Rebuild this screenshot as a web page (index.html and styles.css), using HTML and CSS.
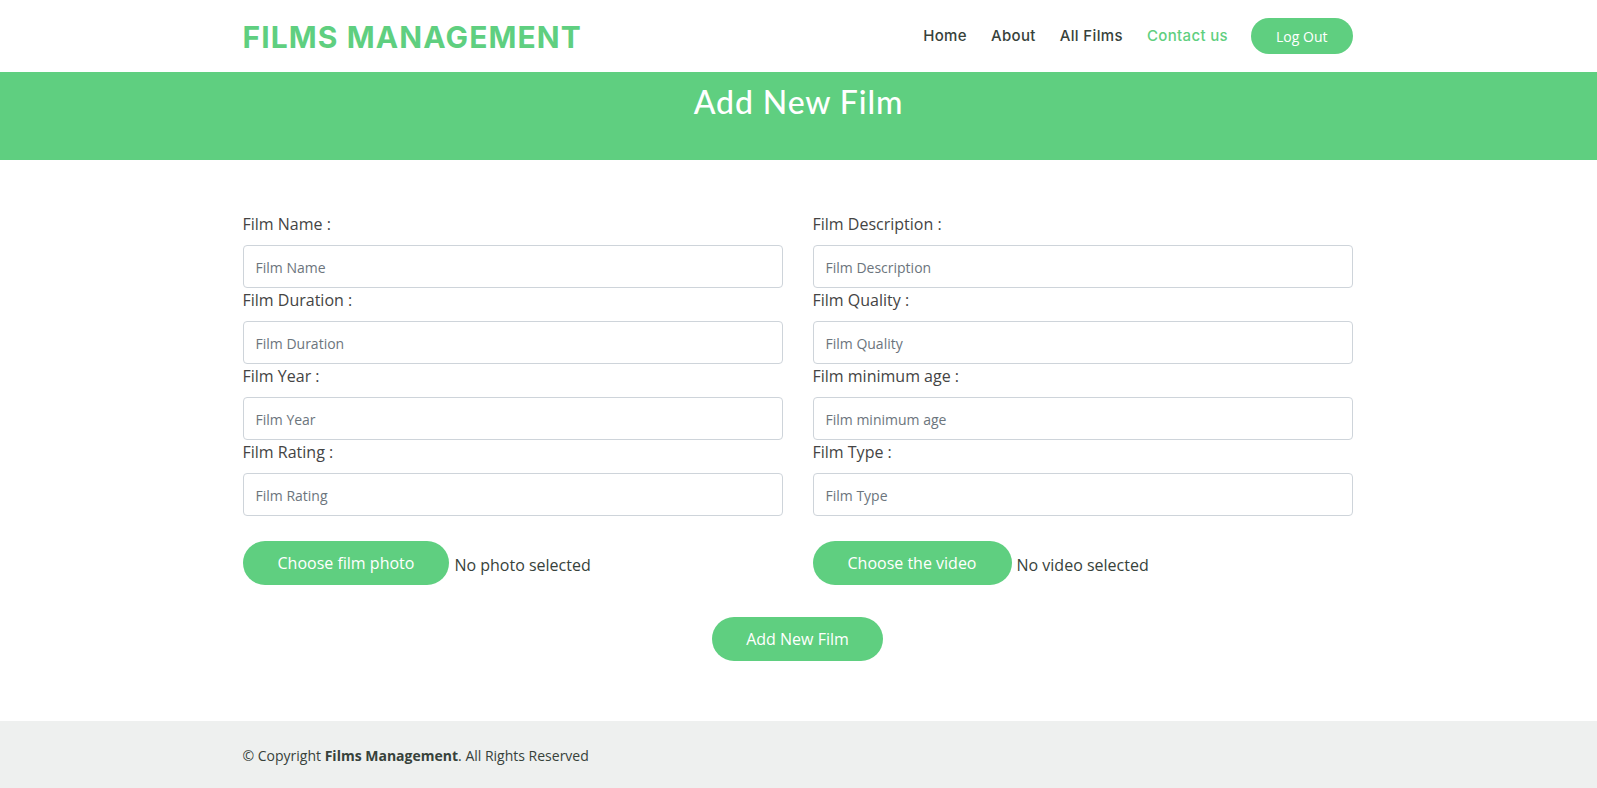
FILE: index.html
```html
<!DOCTYPE html>
<html lang="en">
<head>
<meta charset="utf-8">
<title>Add New Film - Films Management</title>
<link rel="stylesheet" href="styles.css">
</head>
<body>
<header class="header">
  <div class="container header-inner">
    <a class="logo" href="#">Films Management</a>
    <div class="header-right">
      <nav class="nav">
        <a href="#" class="nav-link">Home</a>
        <a href="#" class="nav-link">About</a>
        <a href="#" class="nav-link">All Films</a>
        <a href="#" class="nav-link active">Contact us</a>
      </nav>
      <a href="#" class="logout-btn">Log Out</a>
    </div>
  </div>
</header>

<section class="breadcrumbs">
  <h2 class="page-title">Add New Film</h2>
</section>

<main class="form-section">
  <form class="container film-form">
    <div class="form-grid">
      <div class="field">
        <label class="field-label">Film Name :</label>
        <input class="field-input" type="text" placeholder="Film Name">
      </div>
      <div class="field">
        <label class="field-label">Film Description :</label>
        <input class="field-input" type="text" placeholder="Film Description">
      </div>
      <div class="field">
        <label class="field-label">Film Duration :</label>
        <input class="field-input" type="text" placeholder="Film Duration">
      </div>
      <div class="field">
        <label class="field-label">Film Quality :</label>
        <input class="field-input" type="text" placeholder="Film Quality">
      </div>
      <div class="field">
        <label class="field-label">Film Year :</label>
        <input class="field-input" type="text" placeholder="Film Year">
      </div>
      <div class="field">
        <label class="field-label">Film minimum age :</label>
        <input class="field-input" type="text" placeholder="Film minimum age">
      </div>
      <div class="field">
        <label class="field-label">Film Rating :</label>
        <input class="field-input" type="text" placeholder="Film Rating">
      </div>
      <div class="field">
        <label class="field-label">Film Type :</label>
        <input class="field-input" type="text" placeholder="Film Type">
      </div>
      <div class="file-row">
        <span class="pill-btn">Choose film photo</span>
        <span class="file-status">No photo selected</span>
      </div>
      <div class="file-row">
        <span class="pill-btn">Choose the video</span>
        <span class="file-status">No video selected</span>
      </div>
    </div>
    <div class="submit-row">
      <button type="button" class="pill-btn submit-btn">Add New Film</button>
    </div>
  </form>
</main>

<footer class="footer">
  <div class="container copyright">
    &copy; Copyright <strong>Films Management</strong>. All Rights Reserved
  </div>
</footer>
</body>
</html>
```

FILE: styles.css
```css
* {
  box-sizing: border-box;
}

html, body {
  margin: 0;
  padding: 0;
}

body {
  font-family: "Open Sans", "Liberation Sans", sans-serif;
  color: #444444;
  background: #ffffff;
}

a {
  text-decoration: none;
}

.container {
  width: 1110px;
  margin-left: calc(50% - 556px);
  margin-right: auto;
}

/* Header */
.header {
  height: 72px;
  background: #ffffff;
}

.header-inner {
  height: 72px;
  display: flex;
  align-items: center;
  justify-content: space-between;
}

.logo {
  font-family: "Inter", "Noto Sans", sans-serif;
  font-weight: 700;
  font-size: 30px;
  letter-spacing: 1.1px;
  text-transform: uppercase;
  color: #5fcf80;
  line-height: 1;
  padding-top: 1px;
}

.header-right {
  display: flex;
  align-items: center;
}

.nav {
  display: flex;
  align-items: center;
  gap: 24px;
}

.nav-link {
  font-family: "Inter", "Noto Sans", sans-serif;
  font-weight: 500;
  font-size: 15px;
  letter-spacing: 0.35px;
  color: #37423b;
  line-height: 20px;
}

.nav-link.active {
  color: #5fcf80;
}

.logout-btn {
  margin-left: 23px;
  background: #5fcf80;
  color: #ffffff;
  border-radius: 50px;
  padding: 7.5px 25px;
  font-family: "Open Sans", sans-serif;
  font-size: 14px;
  line-height: 21px;
  display: inline-block;
}

/* Breadcrumbs */
.breadcrumbs {
  background: #5fcf80;
  height: 88px;
  padding-top: 11px;
  text-align: center;
}

.page-title {
  margin: 0;
  font-family: "Lato", "Open Sans", sans-serif;
  font-weight: 500;
  font-size: 32px;
  line-height: 38px;
  color: #ffffff;
  letter-spacing: 0.9px;
}

/* Form */
.form-section {
  padding-top: 52px;
  padding-bottom: 60px;
}

.form-grid {
  display: grid;
  grid-template-columns: 1fr 1fr;
  column-gap: 30px;
}

.field {
  display: flex;
  flex-direction: column;
}

.field-label {
  font-size: 16px;
  line-height: 25px;
  color: #444444;
  margin-bottom: 8px;
}

.field-input {
  height: 43px;
  border: 1px solid #ced4da;
  border-radius: 4px;
  padding: 1px 12px 0;
  font-family: "Open Sans", sans-serif;
  font-size: 14px;
  color: #495057;
  background: #ffffff;
  outline: none;
}

.field-input::placeholder {
  color: #6c757d;
  opacity: 1;
}

.file-row {
  margin-top: 25px;
  display: flex;
  align-items: center;
  gap: 5px;
}

.pill-btn {
  display: inline-block;
  background: #5fcf80;
  color: #ffffff;
  border: 0;
  border-radius: 50px;
  padding: 10px 35px;
  font-family: "Open Sans", sans-serif;
  font-size: 16px;
  line-height: 24px;
  cursor: pointer;
}

.file-status {
  font-size: 16px;
  line-height: 24px;
  color: #37423b;
  padding-top: 3px;
}

.submit-row {
  margin-top: 32px;
  display: flex;
  justify-content: center;
}

.submit-btn {
  padding: 10px 34px;
}

/* Footer */
.footer {
  background: #eef0ef;
  padding: 24px 0 30px;
}

.copyright {
  font-size: 14px;
  line-height: 21px;
  color: #37423b;
}

.copyright strong {
  font-weight: 700;
}
```
